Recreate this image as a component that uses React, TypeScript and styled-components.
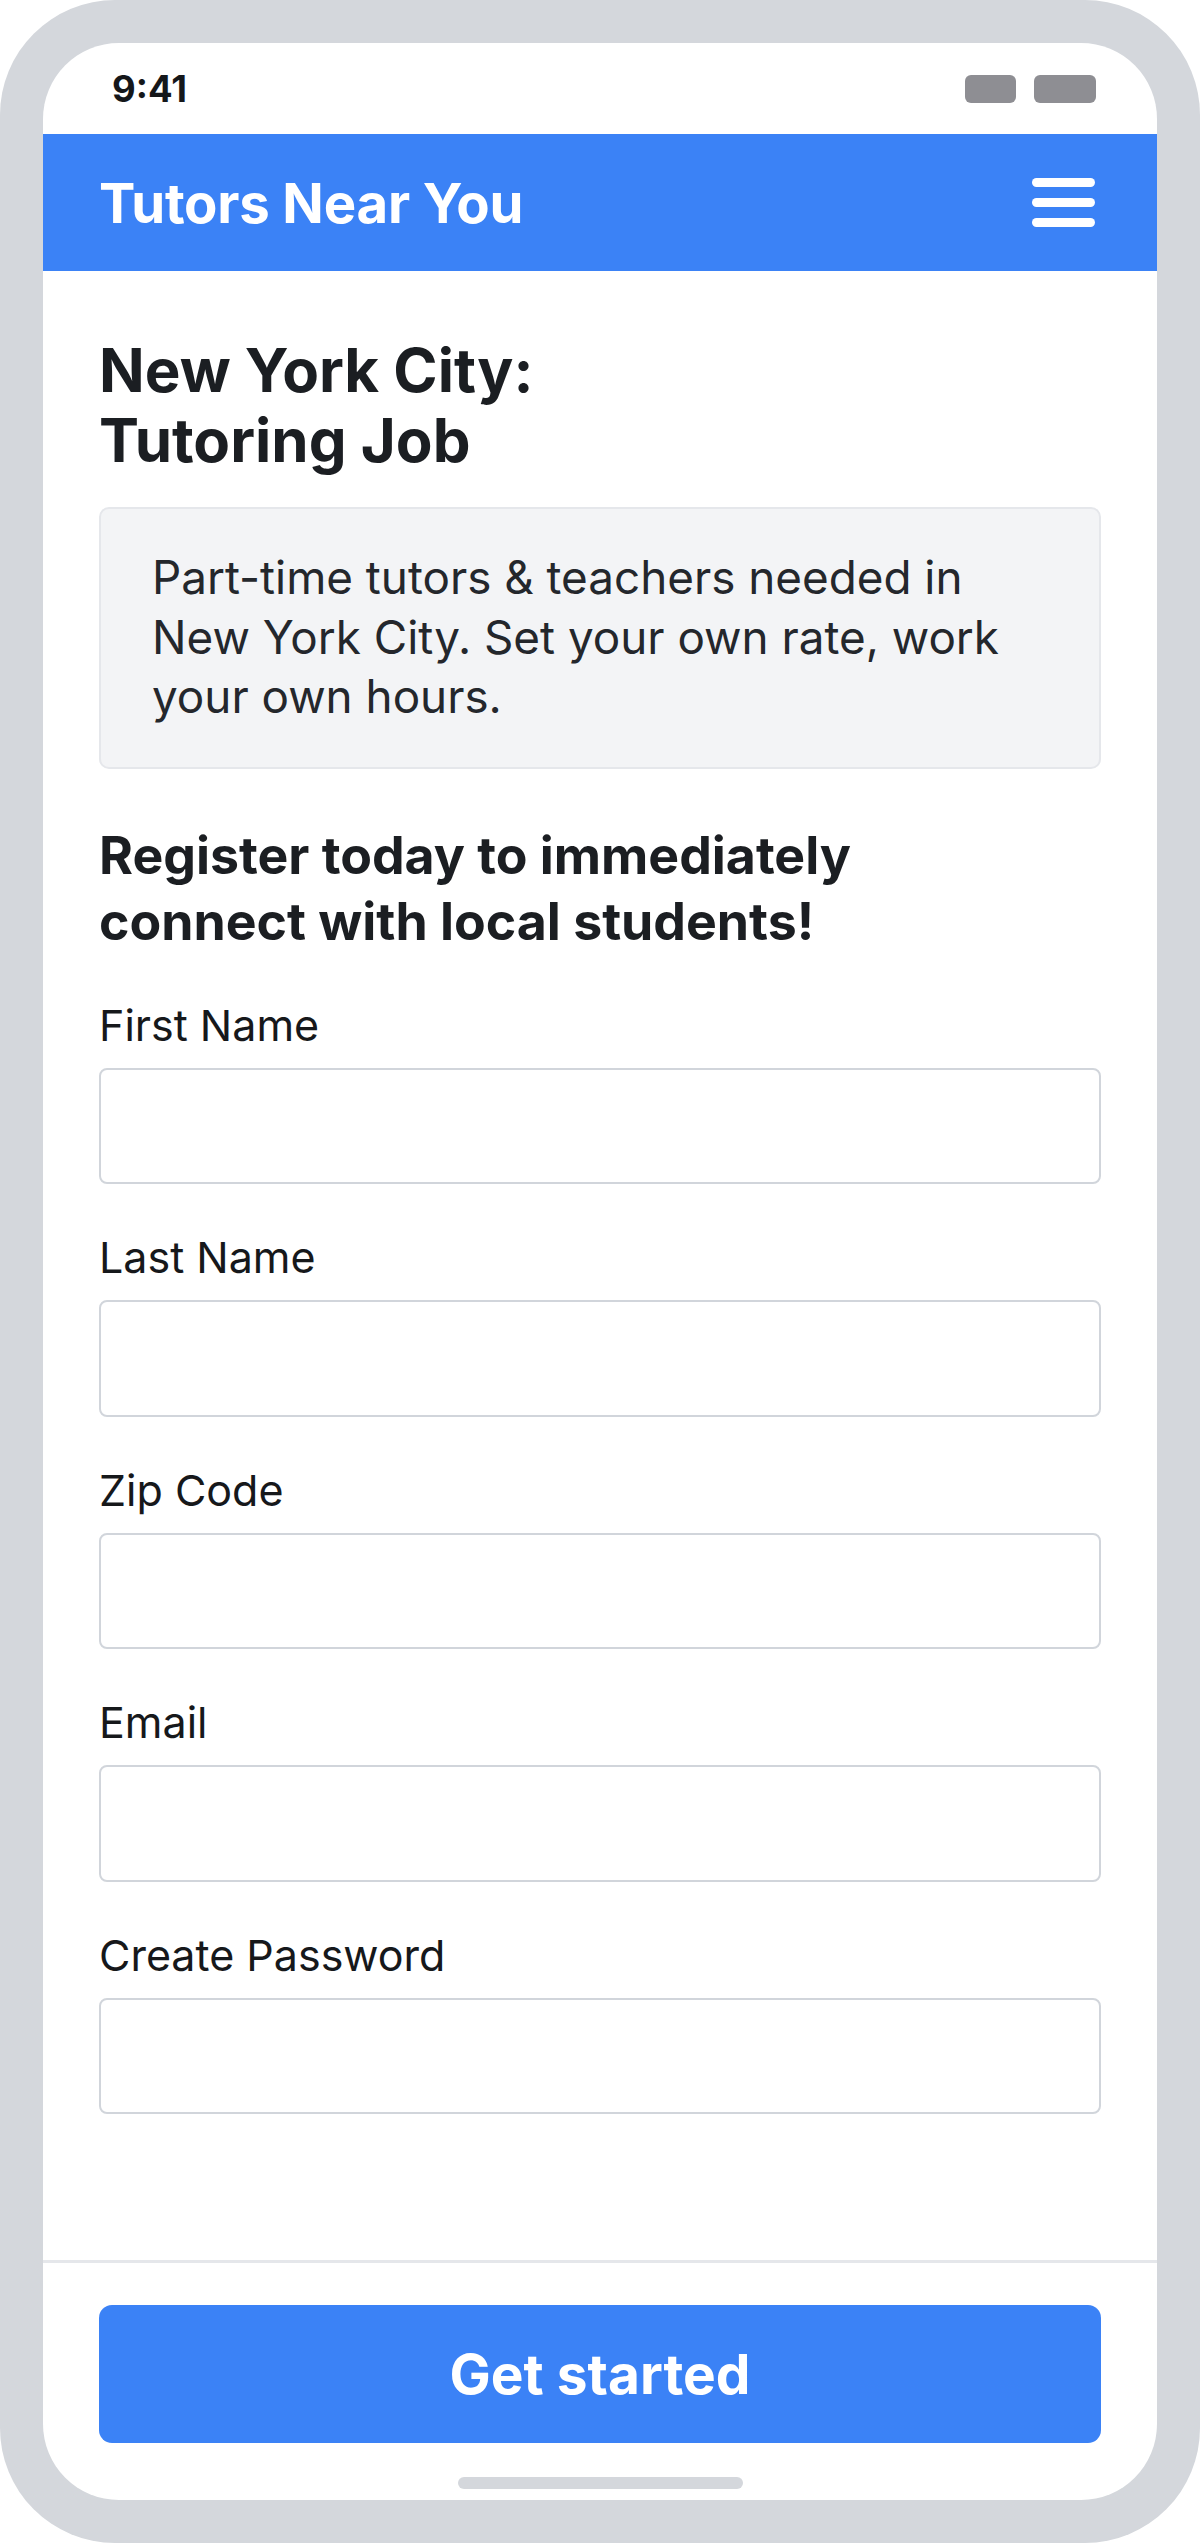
import React from "react"
import styled, { createGlobalStyle } from "styled-components"

const GlobalStyle = createGlobalStyle`
  * { box-sizing: border-box; }
  body {
    margin: 0;
    background: #ffffff;
    font-family: Inter, "Noto Sans", "Liberation Sans", sans-serif;
    color: #1b1e22;
  }
`

const Frame = styled.div`
  width: 1200px;
  height: 2543px;
  padding: 43px;
  background: #d4d7dc;
  border-radius: 115px;
`

const Screen = styled.div`
  height: 100%;
  background: #ffffff;
  border-radius: 76px;
  overflow: hidden;
  display: flex;
  flex-direction: column;
`

const StatusBar = styled.div`
  height: 91px;
  display: flex;
  align-items: center;
  justify-content: space-between;
  padding: 0 61px 0 69px;
`

const Time = styled.span`
  font-size: 36.5px;
  font-weight: 700;
  color: #15171a;
`

const StatusIcons = styled.div`
  display: flex;
  gap: 18px;
`

const StatusPill = styled.span<{ $w: number }>`
  width: ${(p) => p.$w}px;
  height: 28px;
  border-radius: 6px;
  background: #8e8e93;
`

const Header = styled.header`
  height: 137px;
  background: #3b82f6;
  display: flex;
  align-items: center;
  justify-content: space-between;
  padding: 0 62px 0 56px;
`

const Brand = styled.h1`
  margin: 0;
  font-size: 54.5px;
  font-weight: 700;
  color: #ffffff;
  letter-spacing: -0.2px;
`

const MenuButton = styled.button`
  border: none;
  background: none;
  padding: 0;
  display: flex;
`

const Main = styled.main`
  flex: 1;
  padding: 64px 56px 0;
  display: flex;
  flex-direction: column;
`

const Title = styled.h2`
  margin: 0 0 32px;
  font-size: 60px;
  line-height: 70px;
  font-weight: 700;
`

const InfoBox = styled.div`
  background: #f3f4f6;
  border: 2px solid #e5e7eb;
  border-radius: 10px;
  padding: 39px 52px 40px 51px;
  font-size: 45.8px;
  line-height: 59.5px;
  color: #24272c;
`

const SubHeading = styled.h3`
  margin: 53px 0 40px;
  font-size: 51.8px;
  line-height: 66.5px;
  font-weight: 700;
`

const Form = styled.form`
  display: flex;
  flex-direction: column;
  gap: 43px;
`

const Field = styled.label`
  display: flex;
  flex-direction: column;
  gap: 13px;
`

const LabelText = styled.span`
  font-size: 43px;
  line-height: 60px;
  color: #16181b;
`

const Input = styled.input`
  height: 116.5px;
  border: 2px solid #d1d5db;
  border-radius: 8px;
  background: #ffffff;
  padding: 0 24px;
  font: inherit;
  font-size: 40px;
  outline: none;
`

const Footer = styled.footer`
  border-top: 3px solid #e5e7eb;
  padding: 42px 56px 11px;
  display: flex;
  flex-direction: column;
  align-items: center;
`

const CTA = styled.button`
  width: 100%;
  height: 138px;
  border: none;
  border-radius: 13px;
  background: #3b82f6;
  color: #ffffff;
  font-family: inherit;
  font-size: 55px;
  font-weight: 700;
`

const HomeBar = styled.span`
  margin-top: 34px;
  width: 285px;
  height: 12px;
  border-radius: 6px;
  background: #d4d7dc;
`

const fields = [
  { label: "First Name", type: "text" },
  { label: "Last Name", type: "text" },
  { label: "Zip Code", type: "text" },
  { label: "Email", type: "email" },
  { label: "Create Password", type: "password" },
]

const MenuIcon = () => (
  <svg width="63" height="49" viewBox="0 0 63 49" fill="none">
    <g stroke="#ffffff" strokeWidth="9" strokeLinecap="round">
      <line x1="4.5" y1="4.5" x2="58.5" y2="4.5" />
      <line x1="4.5" y1="24.5" x2="58.5" y2="24.5" />
      <line x1="4.5" y1="44.5" x2="58.5" y2="44.5" />
    </g>
  </svg>
)

export default function App() {
  return (
    <>
      <GlobalStyle />
      <Frame>
        <Screen>
          <StatusBar>
            <Time>9:41</Time>
            <StatusIcons>
              <StatusPill $w={51} />
              <StatusPill $w={62} />
            </StatusIcons>
          </StatusBar>
          <Header>
            <Brand>Tutors Near You</Brand>
            <MenuButton aria-label="Menu">
              <MenuIcon />
            </MenuButton>
          </Header>
          <Main>
            <Title>
              New York City:
              <br />
              Tutoring Job
            </Title>
            <InfoBox>
              Part-time tutors &amp; teachers needed in New York City. Set your own rate, work your own hours.
            </InfoBox>
            <SubHeading>
              Register today to immediately
              <br />
              connect with local students!
            </SubHeading>
            <Form onSubmit={(e) => e.preventDefault()}>
              {fields.map((f) => (
                <Field key={f.label}>
                  <LabelText>{f.label}</LabelText>
                  <Input type={f.type} />
                </Field>
              ))}
            </Form>
          </Main>
          <Footer>
            <CTA type="button">Get started</CTA>
            <HomeBar />
          </Footer>
        </Screen>
      </Frame>
    </>
  )
}
